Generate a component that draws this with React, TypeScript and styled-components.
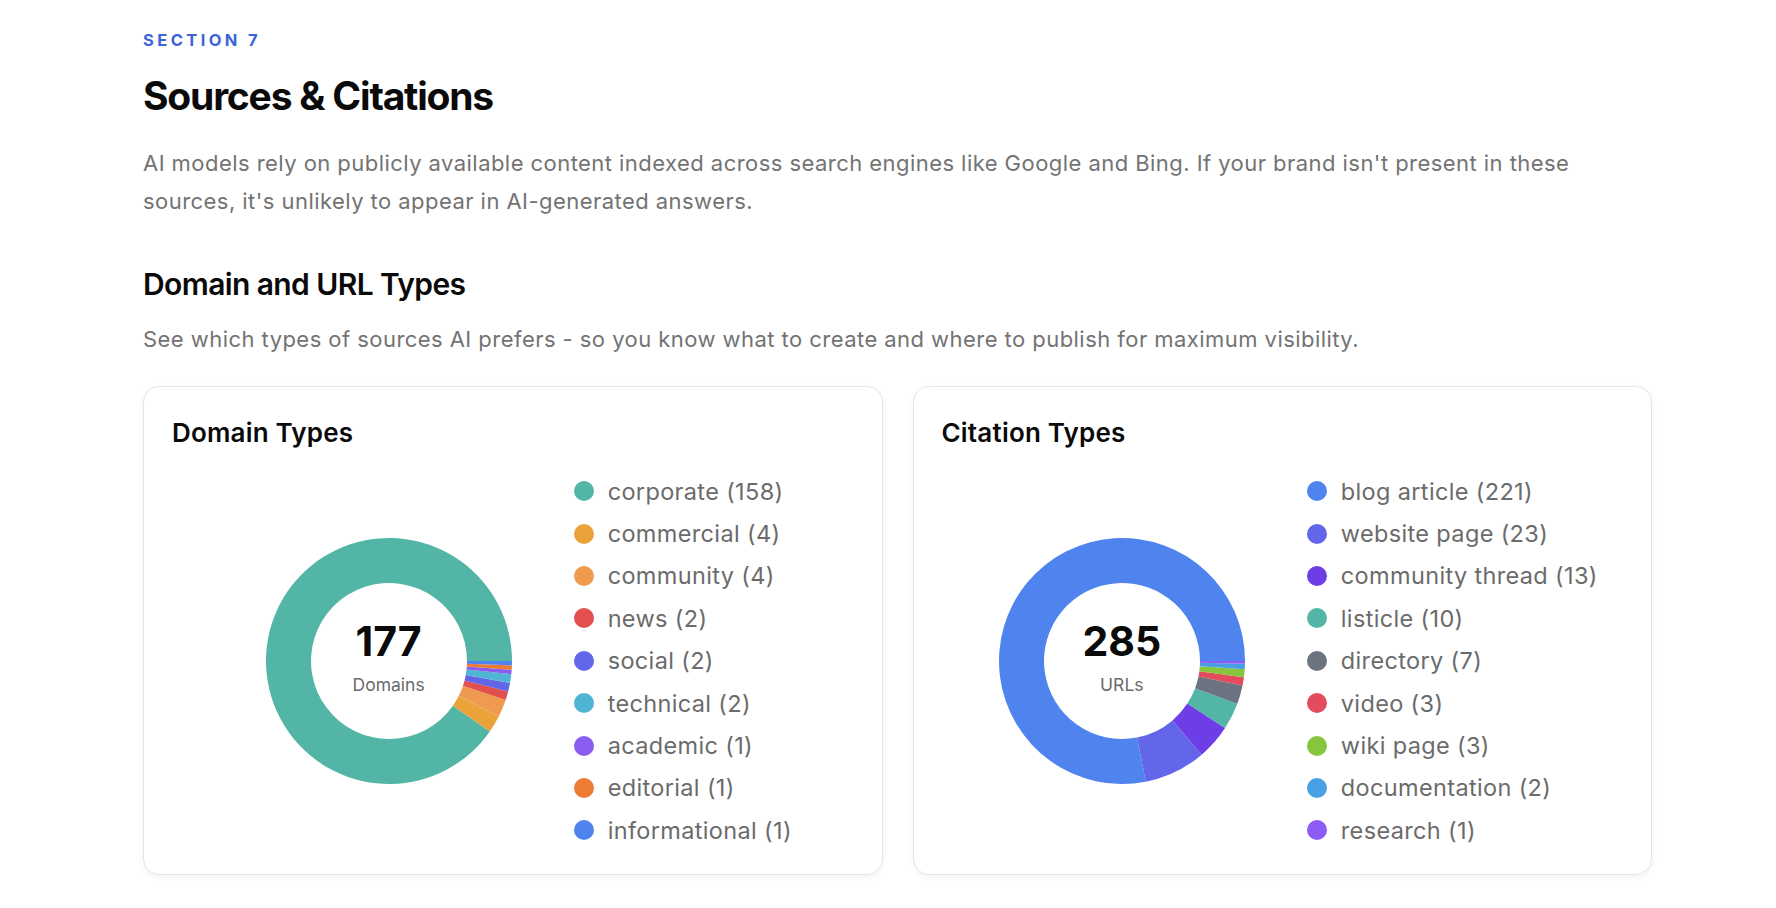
import React from 'react'
import styled, { createGlobalStyle } from 'styled-components'

const GlobalStyle = createGlobalStyle`
  body {
    margin: 0;
    background: #ffffff;
    font-family: Inter, "Noto Sans", sans-serif;
    -webkit-font-smoothing: antialiased;
  }
`

interface Slice {
  label: string
  value: number
  color: string
}

const domainData: Slice[] = [
  { label: 'corporate', value: 158, color: '#53b5a5' },
  { label: 'commercial', value: 4, color: '#eaa33b' },
  { label: 'community', value: 4, color: '#ef9b4f' },
  { label: 'news', value: 2, color: '#e24f4c' },
  { label: 'social', value: 2, color: '#6366e8' },
  { label: 'technical', value: 2, color: '#50b4d4' },
  { label: 'academic', value: 1, color: '#8b5cf0' },
  { label: 'editorial', value: 1, color: '#ec7b34' },
  { label: 'informational', value: 1, color: '#4f83ee' },
]

const citationData: Slice[] = [
  { label: 'blog article', value: 221, color: '#4f83ee' },
  { label: 'website page', value: 23, color: '#6366e8' },
  { label: 'community thread', value: 13, color: '#6d3de6' },
  { label: 'listicle', value: 10, color: '#53b5a5' },
  { label: 'directory', value: 7, color: '#6b7280' },
  { label: 'video', value: 3, color: '#e34b5f' },
  { label: 'wiki page', value: 3, color: '#86c63e' },
  { label: 'documentation', value: 2, color: '#48a0e4' },
  { label: 'research', value: 1, color: '#8b5cf6' },
]

const Page = styled.main`
  padding: 30px 124px 30px 143px;
`

const Eyebrow = styled.div`
  font-size: 16.5px;
  font-weight: 700;
  letter-spacing: 3.4px;
  color: #3d63dd;
`

const Title = styled.h1`
  margin: 22px 0 0;
  font-size: 39px;
  font-weight: 700;
  letter-spacing: -1.2px;
  color: #0a0a0a;
`

const Lead = styled.p`
  margin: 25px 0 0;
  font-size: 22px;
  line-height: 38px;
  color: #737373;
  letter-spacing: 0.45px;
  white-space: nowrap;
`

const SubTitle = styled.h2`
  margin: 46px 0 0;
  font-size: 30px;
  font-weight: 600;
  letter-spacing: -0.6px;
  color: #0a0a0a;
`

const SubLead = styled.p`
  margin: 24px 0 0;
  font-size: 22px;
  color: #737373;
  letter-spacing: 0.45px;
`

const Cards = styled.div`
  display: grid;
  grid-template-columns: 1fr 1fr;
  gap: 30px;
  margin-top: 34px;
  width: 1509px;
`

const Card = styled.section`
  border: 1.5px solid #e5e5e5;
  border-radius: 16px;
  box-shadow: 0 2px 6px rgba(0, 0, 0, 0.06);
  padding: 30px 28px 22px;
  height: 489px;
  box-sizing: border-box;
`

const CardTitle = styled.h3`
  margin: 0;
  font-size: 26px;
  font-weight: 600;
  letter-spacing: 0.2px;
  color: #0a0a0a;
`

const CardBody = styled.div`
  display: flex;
  justify-content: center;
  align-items: center;
  gap: 60px;
  padding-left: 30px;
  margin-top: 28px;
`

const ChartWrap = styled.div`
  position: relative;
  width: 250px;
  height: 250px;
  flex: none;
`

const Center = styled.div`
  position: absolute;
  inset: 0;
  display: flex;
  flex-direction: column;
  align-items: center;
  justify-content: center;
`

const Total = styled.div`
  font-size: 41px;
  font-weight: 700;
  color: #0a0a0a;
  line-height: 1;
  margin-top: -6px;
`

const Unit = styled.div`
  font-size: 17.5px;
  color: #6b6b6b;
  margin-top: 12px;
`

const Legend = styled.ul`
  list-style: none;
  margin: 0;
  padding: 0;
  display: flex;
  flex-direction: column;
  gap: 12px;
`

const LegendItem = styled.li`
  display: flex;
  align-items: center;
  gap: 14px;
  font-size: 23.5px;
  letter-spacing: 0.35px;
  height: 30.4px;
  color: #6b6b6b;
  white-space: nowrap;
`

const Dot = styled.span<{ $color: string }>`
  width: 20px;
  height: 20px;
  border-radius: 50%;
  background: ${(p) => p.$color};
  flex: none;
`

function Donut({ data }: { data: Slice[] }) {
  const total = data.reduce((s, d) => s + d.value, 0)
  const cx = 125
  const cy = 125
  const R = 123
  const r = 78
  let a = 0
  const pt = (rad: number, ang: number) => [cx + rad * Math.cos(ang), cy - rad * Math.sin(ang)]
  return (
    <svg width={250} height={250} viewBox="0 0 250 250">
      {data.map((d) => {
        const a0 = a
        const a1 = a + (d.value / total) * Math.PI * 2
        a = a1
        const large = a1 - a0 > Math.PI ? 1 : 0
        const [x0, y0] = pt(R, a0)
        const [x1, y1] = pt(R, a1)
        const [x2, y2] = pt(r, a1)
        const [x3, y3] = pt(r, a0)
        const path = `M${x0} ${y0} A${R} ${R} 0 ${large} 0 ${x1} ${y1} L${x2} ${y2} A${r} ${r} 0 ${large} 1 ${x3} ${y3} Z`
        return <path key={d.label} d={path} fill={d.color} />
      })}
    </svg>
  )
}

function ChartCard({ title, unit, total, data }: { title: string; unit: string; total: number; data: Slice[] }) {
  return (
    <Card>
      <CardTitle>{title}</CardTitle>
      <CardBody>
        <ChartWrap>
          <Donut data={data} />
          <Center>
            <Total>{total}</Total>
            <Unit>{unit}</Unit>
          </Center>
        </ChartWrap>
        <Legend>
          {data.map((d) => (
            <LegendItem key={d.label}>
              <Dot $color={d.color} />
              {d.label} ({d.value})
            </LegendItem>
          ))}
        </Legend>
      </CardBody>
    </Card>
  )
}

export default function App() {
  return (
    <>
      <GlobalStyle />
      <Page>
        <Eyebrow>SECTION 7</Eyebrow>
        <Title>Sources &amp; Citations</Title>
        <Lead>
          AI models rely on publicly available content indexed across search engines like Google and Bing. If your brand isn't present in these
          <br />
          sources, it's unlikely to appear in AI-generated answers.
        </Lead>
        <SubTitle>Domain and URL Types</SubTitle>
        <SubLead>
          See which types of sources AI prefers - so you know what to create and where to publish for maximum visibility.
        </SubLead>
        <Cards>
          <ChartCard title="Domain Types" unit="Domains" total={177} data={domainData} />
          <ChartCard title="Citation Types" unit="URLs" total={285} data={citationData} />
        </Cards>
      </Page>
    </>
  )
}
